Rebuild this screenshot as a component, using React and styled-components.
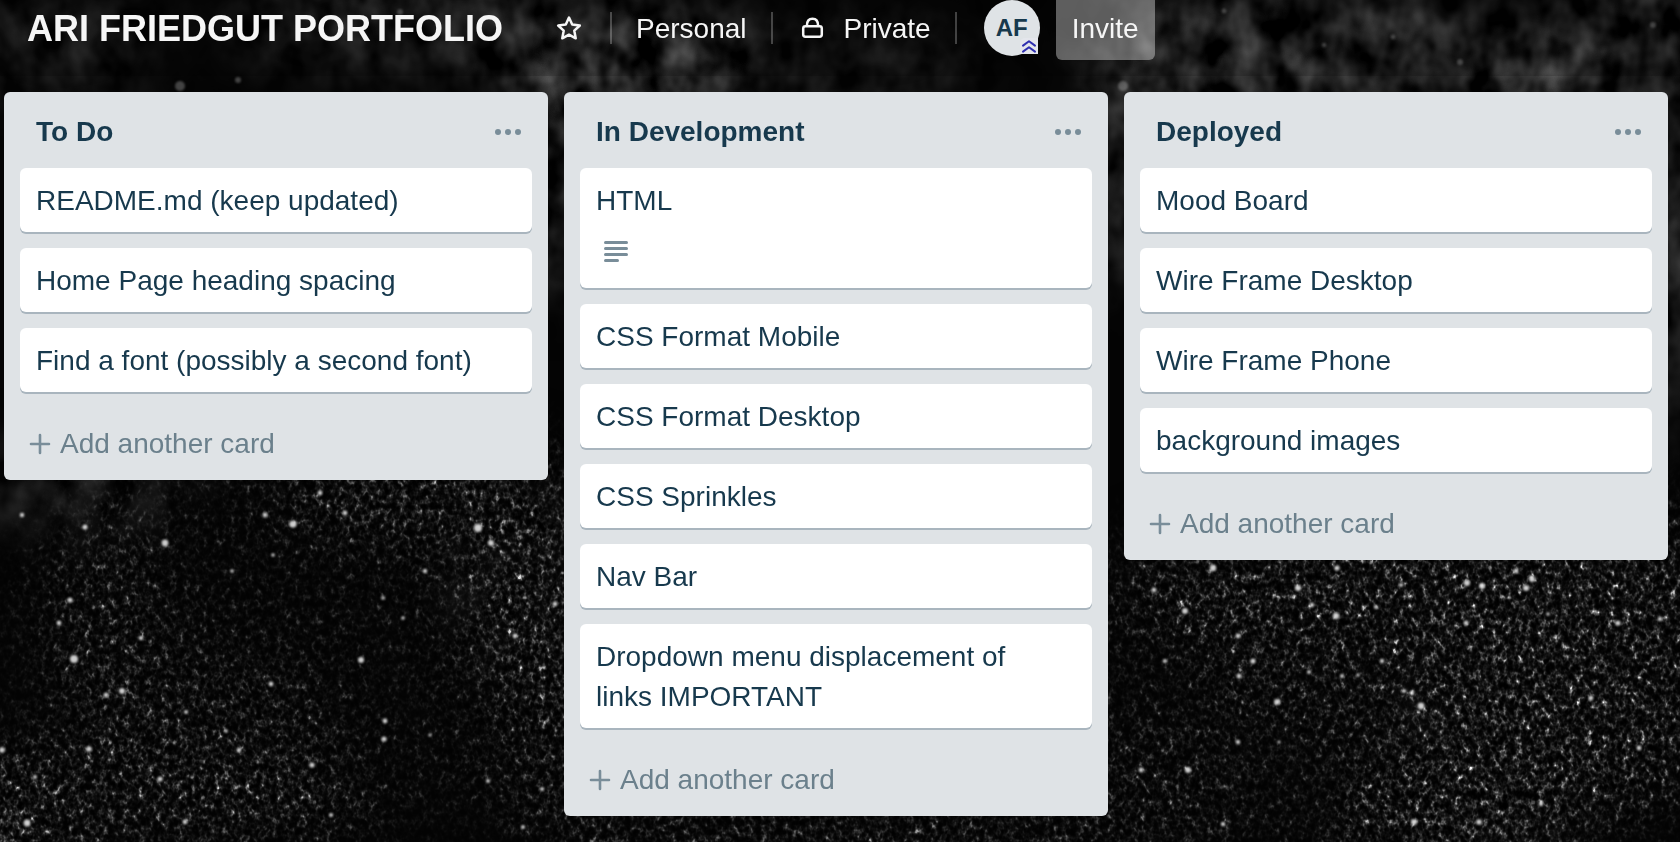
import React from 'react';
import styled, { createGlobalStyle } from 'styled-components';

const GlobalStyle = createGlobalStyle`
  *, *::before, *::after { box-sizing: border-box; }
  body {
    margin: 0;
    background: #050505;
    color: #17394d;
    font-family: "Liberation Sans", Arial, sans-serif;
    font-size: 28px;
    line-height: 40px;
  }
  button { font: inherit; color: inherit; border: 0; background: none; padding: 0; cursor: pointer; }
  svg { display: block; flex: none; }
`;

const Backdrop = styled.svg`
  position: fixed;
  inset: 0;
  z-index: -1;
  width: 100%;
  height: 100%;
`;

const Board = styled.div`
  display: flex;
  flex-direction: column;
  min-height: 100vh;
`;

const Header = styled.header`
  display: flex;
  align-items: flex-start;
  min-height: 76px;
  padding: 0 27px;
  background: rgba(0, 0, 0, 0.16);
  color: #f6f6f6;
  white-space: nowrap;
`;

const Title = styled.h1`
  margin: 0 25px 0 0;
  font-size: 36px;
  font-weight: 700;
  line-height: 58px;
`;

const HeaderButton = styled.button`
  display: flex;
  align-items: center;
  gap: 15px;
  height: 58px;
  padding: 0 ${(p) => (p.$wide ? 28 : 24)}px;
`;

const Divider = styled.span`
  width: 2px;
  height: 32px;
  margin-top: 12px;
  background: rgba(255, 255, 255, 0.24);
`;

const Avatar = styled.button`
  position: relative;
  width: 56px;
  height: 56px;
  margin: 0 16px 0 27px;
  border-radius: 50%;
  background: #dfe3e6;
  color: #17394d;
  font-size: 24px;
  font-weight: 700;
`;

const AdminBadge = styled.svg`
  position: absolute;
  right: 2px;
  bottom: 2px;
`;

const Invite = styled.button`
  height: 60px;
  padding: 0 16px 2px;
  border-radius: 0 0 6px 6px;
  background: rgba(255, 255, 255, 0.36);
`;

const Lists = styled.main`
  display: grid;
  grid-template-columns: repeat(3, minmax(0, 1fr));
  align-items: start;
  gap: 16px;
  padding: 16px 12px 24px 4px;
`;

const Column = styled.section`
  padding: 0 16px;
  border-radius: 6px;
  background: #dfe3e6;
`;

const ColumnHeader = styled.div`
  display: flex;
  align-items: center;
  justify-content: space-between;
  height: 76px;
  padding: 4px 8px 0 16px;
`;

const ColumnTitle = styled.h2`
  margin: 0;
  font-size: 28px;
  font-weight: 700;
`;

const Cards = styled.ul`
  display: flex;
  flex-direction: column;
  gap: 16px;
  margin: 0;
  padding: 0;
  list-style: none;
`;

const Card = styled.a`
  display: block;
  padding: 13px 32px 11px 16px;
  border-radius: 6px;
  background: #fff;
  box-shadow: 0 2px 0 #a9b5be;
  color: #17394d;
  text-decoration: none;
`;

const Badges = styled.span`
  display: flex;
  align-items: center;
  height: 56px;
  padding: 6px 8px 0;
`;

const AddCard = styled.button`
  display: flex;
  align-items: center;
  gap: 9px;
  width: 100%;
  height: 72px;
  margin-top: 16px;
  padding: 0 9px;
  color: #6b808c;
`;

const StarIcon = () => (
  <svg width="26" height="26" viewBox="0 0 26 26" fill="none" stroke="#f6f6f6" strokeWidth="2.5" strokeLinejoin="round" aria-hidden="true">
    <path d="M13 1.6 16.2 8.6 23.8 9.5 18.3 14.7 19.7 22.3 13 18.7 6.3 22.3 7.7 14.7 2.2 9.5 9.8 8.6Z" />
  </svg>
);

const LockIcon = () => (
  <svg width="32" height="32" viewBox="0 0 32 32" fill="none" stroke="#f6f6f6" strokeWidth="2.5" aria-hidden="true">
    <rect x="6.2" y="13.2" width="18.6" height="10.6" rx="2.2" />
    <path d="M9.9 12.8C9.9 8.8 11.8 5.8 15.5 5.8S21.1 8.8 21.1 12.8" />
  </svg>
);

const DotsIcon = () => (
  <svg width="32" height="32" viewBox="0 0 32 32" fill="#798d99" aria-hidden="true">
    <circle cx="6" cy="16" r="3" />
    <circle cx="16" cy="16" r="3" />
    <circle cx="26" cy="16" r="3" />
  </svg>
);

const DescriptionIcon = () => (
  <svg width="24" height="22" viewBox="0 0 24 22" fill="#798d99" aria-label="This card has a description" role="img">
    <rect y="0" width="24" height="3" rx="1.5" />
    <rect y="6" width="24" height="3" rx="1.5" />
    <rect y="12" width="24" height="3" rx="1.5" />
    <rect y="18" width="15" height="3" rx="1.5" />
  </svg>
);

const PlusIcon = () => (
  <svg width="22" height="22" viewBox="0 0 22 22" stroke="#798d99" strokeWidth="2.6" strokeLinecap="round" aria-hidden="true">
    <path d="M11 2v18M2 11h18" />
  </svg>
);

const brightStars = [
  [165, 543, 3.4], [293, 524, 3.6], [74, 659, 4], [361, 660, 3], [345, 513, 2.4], [425, 571, 2.2],
  [271, 684, 2.4], [122, 691, 3], [106, 695, 2.4], [320, 493, 2.4], [312, 765, 2.6], [160, 779, 2.6],
  [89, 749, 2.8], [2, 750, 2.8], [239, 750, 2.2], [185, 822, 2.4], [385, 721, 2.4], [384, 739, 2.6],
  [35, 777, 2], [515, 636, 2.4], [478, 528, 4], [491, 543, 3], [70, 600, 2.6], [59, 623, 2.4],
  [27, 823, 3.4], [488, 781, 2], [523, 827, 2], [22, 515, 2.2], [265, 515, 2.4], [331, 815, 2],
  [85, 527, 2.6], [141, 638, 2.2], [555, 604, 2.4], [232, 571, 1.8], [403, 618, 1.8], [383, 598, 1.8],
  [273, 555, 1.8], [186, 712, 2], [226, 731, 1.8], [430, 735, 1.6], [542, 789, 2],
  [1421, 706, 3.4], [1188, 770, 3], [1141, 770, 2.4], [1213, 568, 3.2], [1337, 568, 2.6],
  [1467, 583, 3], [1482, 586, 3], [1526, 588, 3], [1532, 579, 3], [1516, 571, 2.4], [1298, 588, 3],
  [1336, 616, 3.2], [1185, 611, 3], [1376, 607, 2], [1238, 636, 2.4], [1239, 676, 2.4], [1253, 661, 2.6],
  [1309, 672, 2], [1342, 676, 2], [1358, 675, 1.6], [1382, 661, 2.2], [1277, 702, 3], [1466, 623, 2.4],
  [1165, 661, 2], [1154, 590, 2.4], [1414, 822, 3], [1479, 822, 2.8], [1223, 824, 2.2], [1404, 691, 2],
  [1412, 693, 2.2], [1618, 623, 2.6], [1660, 619, 2.2], [1541, 804, 2.2], [1639, 748, 2.4],
  [1238, 742, 2.2], [1279, 742, 1.6], [1312, 605, 2.2], [1401, 585, 2], [1548, 614, 1.8], [1591, 698, 2.4],
  [400, 12, 3], [180, 86, 5], [238, 80, 3], [1123, 86, 5], [1224, 11, 2.4], [1393, 37, 2.4],
  [1324, 45, 2.2], [1460, 62, 3], [1653, 25, 3],
];

const coarseZones = [
  [620, 60, 130, 60, 1], [400, 20, 180, 50, 0.6], [60, 40, 110, 60, 0.4], [1290, 50, 200, 70, 0.8],
  [1540, 65, 80, 50, 1], [1640, 20, 60, 60, 0.7], [840, 60, 160, 40, 0.4], [555, 150, 30, 150, 0.8],
  [1115, 170, 25, 120, 0.8], [1675, 200, 25, 260, 0.8], [70, 490, 120, 40, 0.5],
  [1500, 700, 100, 140, 0.4], [520, 580, 60, 90, 0.4],
];

const fineZones = [
  [420, 490, 150, 50, 0.8], [530, 600, 60, 110, 0.9], [550, 740, 50, 110, 0.6], [110, 640, 50, 130, 0.6],
  [10, 820, 60, 80, 1], [190, 800, 180, 60, 0.7], [220, 720, 110, 80, 0.4],
  [1250, 590, 130, 50, 0.9], [1480, 580, 190, 70, 0.9], [1520, 700, 100, 150, 1], [1460, 810, 130, 60, 1],
  [1620, 660, 110, 160, 0.8], [1350, 670, 150, 80, 0.5], [1160, 790, 100, 70, 0.4], [840, 835, 320, 30, 0.9],
  [330, 640, 330, 200, 0.25], [1350, 700, 330, 200, 0.25],
];

function Zones({ items }) {
  return items.map(([x, y, rx, ry, strength]) => (
    <ellipse key={`${x}-${y}`} cx={x} cy={y} rx={rx} ry={ry} fill="#fff" opacity={strength} />
  ));
}

function Galaxy() {
  return (
    <Backdrop viewBox="0 0 1680 842" preserveAspectRatio="xMidYMid slice" aria-hidden="true">
      <defs>
        <filter id="soften" x="-20%" y="-20%" width="140%" height="140%">
          <feGaussianBlur stdDeviation="30" />
        </filter>
        <filter id="glow">
          <feGaussianBlur stdDeviation="1" />
        </filter>
        <filter id="dust" x="0" y="0" width="100%" height="100%" colorInterpolationFilters="sRGB">
          <feTurbulence type="fractalNoise" baseFrequency="0.26 0.2" numOctaves="2" seed="7" />
          <feColorMatrix values="1 0 0 0 0  1 0 0 0 0  1 0 0 0 0  0 0 0 0 1" result="grain" />
          <feTurbulence type="fractalNoise" baseFrequency="0.13 0.11" numOctaves="2" seed="31" />
          <feColorMatrix values="1 0 0 0 0  1 0 0 0 0  1 0 0 0 0  0 0 0 0 1" result="clumps" />
          <feComposite in="grain" in2="clumps" operator="arithmetic" k1="1.6" k2="0" k3="0" k4="0" />
          <feComponentTransfer>
            <feFuncR type="gamma" amplitude="1.2" exponent="3" />
            <feFuncG type="gamma" amplitude="1.2" exponent="3" />
            <feFuncB type="gamma" amplitude="1.2" exponent="3" />
            <feFuncA type="linear" slope="0" intercept="1" />
          </feComponentTransfer>
        </filter>
        <filter id="cloud" x="0" y="0" width="100%" height="100%" colorInterpolationFilters="sRGB">
          <feTurbulence type="fractalNoise" baseFrequency="0.03 0.024" numOctaves="3" seed="12" />
          <feColorMatrix values="0.8 0 0 0 -0.24  0.8 0 0 0 -0.24  0.8 0 0 0 -0.24  0 0 0 0 1" />
        </filter>
        <mask id="fineMask">
          <rect width="1680" height="842" fill="#000" />
          <g filter="url(#soften)"><Zones items={fineZones} /></g>
        </mask>
        <mask id="coarseMask">
          <rect width="1680" height="842" fill="#000" />
          <g filter="url(#soften)"><Zones items={coarseZones} /></g>
        </mask>
      </defs>
      <rect width="1680" height="842" fill="#040404" />
      <g mask="url(#coarseMask)">
        <rect width="1680" height="842" filter="url(#cloud)" />
      </g>
      <g mask="url(#fineMask)">
        <rect width="1680" height="842" filter="url(#dust)" />
      </g>
      <g fill="#fff" filter="url(#glow)">
        {brightStars.map(([x, y, r]) => (
          <circle key={`${x}-${y}`} cx={x} cy={y} r={r} opacity={y < 100 ? 0.25 : 0.8} />
        ))}
      </g>
    </Backdrop>
  );
}

const columns = [
  {
    title: 'To Do',
    cards: ['README.md (keep updated)', 'Home Page heading spacing', 'Find a font (possibly a second font)'],
  },
  {
    title: 'In Development',
    described: 'HTML',
    cards: [
      'HTML',
      'CSS Format Mobile',
      'CSS Format Desktop',
      'CSS Sprinkles',
      'Nav Bar',
      'Dropdown menu displacement of links IMPORTANT',
    ],
  },
  {
    title: 'Deployed',
    cards: ['Mood Board', 'Wire Frame Desktop', 'Wire Frame Phone', 'background images'],
  },
];

export default function App() {
  return (
    <Board>
      <GlobalStyle />
      <Galaxy />
      <Header>
        <Title>ARI FRIEDGUT PORTFOLIO</Title>
        <HeaderButton $wide type="button" aria-label="Star this board"><StarIcon /></HeaderButton>
        <Divider />
        <HeaderButton type="button">Personal</HeaderButton>
        <Divider />
        <HeaderButton type="button"><LockIcon />Private</HeaderButton>
        <Divider />
        <Avatar type="button">
          AF
          <AdminBadge width="18" height="16" viewBox="0 0 18 16" aria-hidden="true">
            <path d="M5 0H18V16H0V5A5 5 0 0 1 5 0Z" fill="#e4e6ec" />
            <path d="M3 7.6 9 3.2 15 7.6M3 13.6 9 9.2 15 13.6" fill="none" stroke="#2f2fb0" strokeWidth="2" strokeLinecap="round" strokeLinejoin="round" />
          </AdminBadge>
        </Avatar>
        <Invite type="button">Invite</Invite>
      </Header>
      <Lists>
        {columns.map((column) => (
          <Column key={column.title}>
            <ColumnHeader>
              <ColumnTitle>{column.title}</ColumnTitle>
              <button type="button" aria-label={`${column.title} list actions`}><DotsIcon /></button>
            </ColumnHeader>
            <Cards>
              {column.cards.map((card) => (
                <li key={card}>
                  <Card href="#">
                    {card}
                    {card === column.described && <Badges><DescriptionIcon /></Badges>}
                  </Card>
                </li>
              ))}
            </Cards>
            <AddCard type="button"><PlusIcon />Add another card</AddCard>
          </Column>
        ))}
      </Lists>
    </Board>
  );
}
